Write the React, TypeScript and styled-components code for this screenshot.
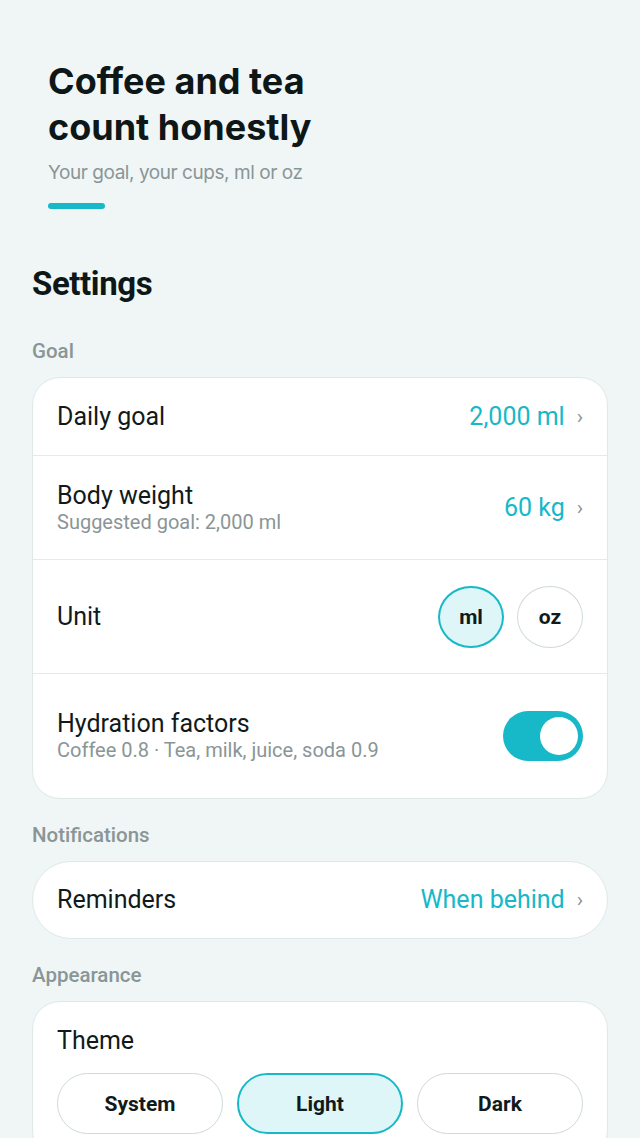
import React, { useState } from "react";
import styled, { createGlobalStyle } from "styled-components";

const teal = "#17b8c8";
const ink = "#111a1b";
const muted = "#8a9596";

const GlobalStyle = createGlobalStyle`
  html, body {
    margin: 0;
    padding: 0;
    background: #f0f6f6;
  }
  * {
    box-sizing: border-box;
  }
`;

const Page = styled.div`
  min-height: 100vh;
  background: #f0f6f6;
  font-family: Roboto, "Liberation Sans", sans-serif;
  color: ${ink};
  padding-bottom: 40px;
`;

const Header = styled.header`
  padding: 58px 48px 0;
  font-family: Inter, "Liberation Sans", sans-serif;
`;

const Title = styled.h1`
  margin: 0;
  font-size: 36px;
  line-height: 46px;
  font-weight: 700;
  letter-spacing: 0;
  color: #0e1718;
`;

const Tagline = styled.p`
  margin: 9px 0 0;
  font-size: 19px;
  line-height: 28px;
  font-weight: 400;
  letter-spacing: -0.45px;
  color: ${muted};
`;

const AccentBar = styled.div`
  margin-top: 16px;
  width: 57px;
  height: 6px;
  border-radius: 3px;
  background: ${teal};
`;

const Main = styled.main`
  padding: 55px 32px 0;
`;

const PageTitle = styled.h2`
  margin: 0;
  font-size: 33px;
  line-height: 40px;
  font-weight: 700;
  letter-spacing: -0.4px;
  color: #0e1718;
`;

const Section = styled.section<{ $first?: boolean }>`
  margin-top: ${(p) => (p.$first ? "35px" : "24px")};
`;

const SectionLabel = styled.div`
  font-size: 20.5px;
  line-height: 24px;
  font-weight: 500;
  color: ${muted};
  margin-bottom: 14px;
`;

const Card = styled.div<{ $pill?: boolean }>`
  background: #ffffff;
  border: 1px solid #dde8e8;
  border-radius: ${(p) => (p.$pill ? "39px" : "28px")};
  overflow: hidden;
`;

const Row = styled.div<{ $pad: number }>`
  display: flex;
  align-items: center;
  justify-content: space-between;
  gap: 16px;
  padding: ${(p) => p.$pad}px 24px;
  & + & {
    border-top: 1px solid #e2eaea;
  }
`;

const RowText = styled.div`
  display: flex;
  flex-direction: column;
`;

const RowTitle = styled.div<{ $tight?: boolean }>`
  font-size: 25px;
  line-height: ${(p) => (p.$tight ? "28px" : "32px")};
  color: ${ink};
`;

const RowHint = styled.div`
  font-size: 20px;
  line-height: 24px;
  color: ${muted};
`;

const ValueLink = styled.button`
  display: flex;
  align-items: center;
  gap: 12px;
  border: 0;
  background: none;
  padding: 0;
  font: inherit;
  cursor: pointer;
`;

const ValueText = styled.span`
  font-size: 25px;
  line-height: 32px;
  color: ${teal};
`;

const Chevron = styled.span`
  font-size: 21px;
  line-height: 32px;
  color: ${muted};
`;

const Choices = styled.div`
  display: flex;
  gap: 13px;
`;

const Chip = styled.button<{ $active?: boolean }>`
  width: 66px;
  height: 62px;
  border-radius: 50%;
  border: ${(p) => (p.$active ? `2px solid ${teal}` : "1.5px solid #cfd9d9")};
  background: ${(p) => (p.$active ? "#def6f8" : "#ffffff")};
  font-family: Roboto, "Liberation Sans", sans-serif;
  font-size: 21px;
  font-weight: 700;
  color: ${ink};
  cursor: pointer;
  padding: 0;
`;

const Toggle = styled.button<{ $on: boolean }>`
  position: relative;
  width: 80px;
  height: 50px;
  border: 0;
  border-radius: 25px;
  background: ${(p) => (p.$on ? teal : "#cfd9d9")};
  cursor: pointer;
  padding: 0;
  flex-shrink: 0;
`;

const Knob = styled.span<{ $on: boolean }>`
  position: absolute;
  top: 6px;
  left: ${(p) => (p.$on ? "37px" : "5px")};
  width: 38px;
  height: 38px;
  border-radius: 50%;
  background: #ffffff;
`;

const ThemeBlock = styled.div`
  padding: 23px 24px 24px;
`;

const ThemeButtons = styled.div`
  display: grid;
  grid-template-columns: repeat(3, 1fr);
  gap: 14px;
  margin-top: 16px;
`;

const ThemeButton = styled.button<{ $active?: boolean }>`
  height: 61px;
  border-radius: 31px;
  border: ${(p) => (p.$active ? `2px solid ${teal}` : "1.5px solid #cfd9d9")};
  background: ${(p) => (p.$active ? "#def6f8" : "#ffffff")};
  font-family: Roboto, "Liberation Sans", sans-serif;
  font-size: 21px;
  font-weight: 700;
  color: ${ink};
  cursor: pointer;
`;

const App: React.FC = () => {
  const [unit, setUnit] = useState<"ml" | "oz">("ml");
  const [factors, setFactors] = useState(true);
  const [theme, setTheme] = useState("Light");

  return (
    <Page>
      <GlobalStyle />
      <Header>
        <Title>
          Coffee and tea
          <br />
          count honestly
        </Title>
        <Tagline>Your goal, your cups, ml or oz</Tagline>
        <AccentBar />
      </Header>

      <Main>
        <PageTitle>Settings</PageTitle>

        <Section $first>
          <SectionLabel>Goal</SectionLabel>
          <Card>
            <Row $pad={22.5}>
              <RowTitle>Daily goal</RowTitle>
              <ValueLink>
                <ValueText>2,000 ml</ValueText>
                <Chevron>›</Chevron>
              </ValueLink>
            </Row>
            <Row $pad={25.5}>
              <RowText>
                <RowTitle $tight>Body weight</RowTitle>
                <RowHint>Suggested goal: 2,000 ml</RowHint>
              </RowText>
              <ValueLink>
                <ValueText>60 kg</ValueText>
                <Chevron>›</Chevron>
              </ValueLink>
            </Row>
            <Row $pad={25.5}>
              <RowTitle>Unit</RowTitle>
              <Choices>
                <Chip $active={unit === "ml"} onClick={() => setUnit("ml")}>
                  ml
                </Chip>
                <Chip $active={unit === "oz"} onClick={() => setUnit("oz")}>
                  oz
                </Chip>
              </Choices>
            </Row>
            <Row $pad={36}>
              <RowText>
                <RowTitle $tight>Hydration factors</RowTitle>
                <RowHint>Coffee 0.8 · Tea, milk, juice, soda 0.9</RowHint>
              </RowText>
              <Toggle $on={factors} onClick={() => setFactors(!factors)}>
                <Knob $on={factors} />
              </Toggle>
            </Row>
          </Card>
        </Section>

        <Section>
          <SectionLabel>Notifications</SectionLabel>
          <Card $pill>
            <Row $pad={22}>
              <RowTitle>Reminders</RowTitle>
              <ValueLink>
                <ValueText>When behind</ValueText>
                <Chevron>›</Chevron>
              </ValueLink>
            </Row>
          </Card>
        </Section>

        <Section>
          <SectionLabel>Appearance</SectionLabel>
          <Card>
            <ThemeBlock>
              <RowTitle>Theme</RowTitle>
              <ThemeButtons>
                {["System", "Light", "Dark"].map((t) => (
                  <ThemeButton key={t} $active={theme === t} onClick={() => setTheme(t)}>
                    {t}
                  </ThemeButton>
                ))}
              </ThemeButtons>
            </ThemeBlock>
          </Card>
        </Section>
      </Main>
    </Page>
  );
};

export default App;
